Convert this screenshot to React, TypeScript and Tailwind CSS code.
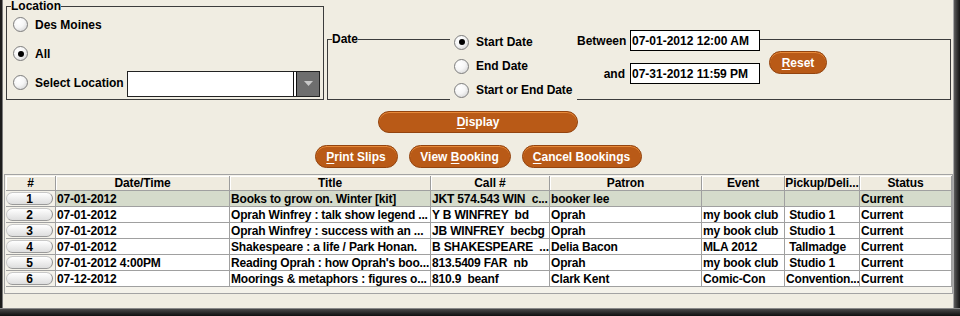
import React from "react";

function Radio({ checked }: { checked?: boolean }) {
  return (
    <span className="flex h-[15px] w-[15px] shrink-0 items-center justify-center rounded-full border border-[#7d7d7d] bg-[radial-gradient(circle_at_35%_30%,#ffffff_0%,#f6f6f6_45%,#cdcdcd_100%)]">
      {checked && <span className="h-[6px] w-[6px] rounded-full bg-black" />}
    </span>
  );
}

function OBtn({ className, children }: { className: string; children: React.ReactNode }) {
  return (
    <div
      className={
        "flex items-center justify-center rounded-full border border-[#93440f] bg-[#b95a17] text-[12px] font-bold leading-none text-white shadow-[inset_0_1px_0_#e88a3a] " +
        className
      }
    >
      {children}
    </div>
  );
}

function U({ children }: { children: React.ReactNode }) {
  return <span className="underline decoration-1 underline-offset-[2px]">{children}</span>;
}

const colW = [
  "w-[50px]",
  "w-[174px]",
  "w-[201px]",
  "w-[119px]",
  "w-[152px]",
  "w-[83px]",
  "w-[75px]",
  "w-[92px]",
];

const headers = ["#", "Date/Time", "Title", "Call #", "Patron", "Event", "Pickup/Deli...", "Status"];

const rows: string[][] = [
  ["07-01-2012", "Books to grow on. Winter [kit]", "JKT 574.543 WIN  c...", "booker lee", "", "", "Current"],
  ["07-01-2012", "Oprah Winfrey : talk show legend ...", "Y B WINFREY  bd", "Oprah", "my book club", " Studio 1", "Current"],
  ["07-01-2012", "Oprah Winfrey : success with an ...", "JB WINFREY  becbg", "Oprah", "my book club", " Studio 1", "Current"],
  ["07-01-2012", "Shakespeare : a life / Park Honan.", "B SHAKESPEARE  ...", "Delia Bacon", "MLA 2012", " Tallmadge", "Current"],
  ["07-01-2012 4:00PM", "Reading Oprah : how Oprah's boo...", "813.5409 FAR  nb", "Oprah", "my book club", " Studio 1", "Current"],
  ["07-12-2012", "Moorings & metaphors : figures o...", "810.9  beanf", "Clark Kent", "Comic-Con", "Convention...", "Current"],
];

export default function App() {
  return (
    <div className="flex h-[316px] w-[960px] flex-col overflow-hidden bg-[#f0ede2] font-['Liberation_Sans',Arial,sans-serif] text-[12px] font-bold text-black">
      <div className="flex min-h-0 flex-1">
        <div className="w-[3px] border-r border-[#7a7a7a] bg-[#1c1c1c]" />
        <main className="flex w-[950px] flex-col">
          {/* Top row */}
          <div className="flex h-[100px]">
            <fieldset className="ml-[3px] h-[100px] w-[318px] border border-[#3c3c3c] p-0">
              <legend className="ml-[4px] px-0 leading-[12px]">Location</legend>
              <div className="-mt-[2px] flex flex-col">
                <div className="flex h-[29px] items-center pl-[6px]">
                  <Radio />
                  <span className="ml-[7px]">Des Moines</span>
                </div>
                <div className="flex h-[29px] items-center pl-[6px]">
                  <Radio checked />
                  <span className="ml-[7px]">All</span>
                </div>
                <div className="flex h-[29px] items-center pl-[6px]">
                  <Radio />
                  <span className="ml-[7px] w-[92px]">Select Location</span>
                  <div className="mt-[2px] flex h-[26px] w-[193px] border border-[#222] bg-white">
                    <div className="flex-1" />
                    <div className="flex w-[26px] border-l border-[#111]">
                      <div className="w-[2px] bg-white" />
                      <div className="flex flex-1 items-center justify-center border-l border-[#111] bg-[#6e6e6e]">
                        <svg width="9" height="5" viewBox="0 0 9 5">
                          <path d="M0 0 H9 L4.5 5 Z" fill="#c8c8c8" />
                        </svg>
                      </div>
                    </div>
                  </div>
                </div>
              </div>
            </fieldset>

            <fieldset className="ml-[3px] mt-[33px] h-[67px] w-[624px] border border-[#3c3c3c] p-0">
              <legend className="ml-[4px] px-0 leading-[12px]">Date</legend>
              <div className="-mt-[15px] flex items-start">
                <div className="ml-[122px] flex w-[127px] flex-col bg-[#f0ede2]">
                  <div className="flex h-[24px] items-center pl-[4px]">
                    <Radio checked />
                    <span className="ml-[7px]">Start Date</span>
                  </div>
                  <div className="flex h-[24px] items-center pl-[4px]">
                    <Radio />
                    <span className="ml-[7px]">End Date</span>
                  </div>
                  <div className="flex h-[24px] items-center pl-[4px]">
                    <Radio />
                    <span className="ml-[7px] tracking-[-0.1px]">Start or End Date</span>
                  </div>
                </div>
                <div className="flex flex-col gap-[12px]">
                  <div className="flex h-[21px] items-center">
                    <span className="w-[53px] bg-[#f0ede2] pr-[5px] text-right">Between</span>
                    <div className="flex h-[21px] w-[130px] items-center border border-black bg-white pl-[1px]">
                      07-01-2012 12:00 AM
                    </div>
                  </div>
                  <div className="flex h-[21px] items-center">
                    <span className="w-[53px] pr-[5px] text-right">and</span>
                    <div className="flex h-[21px] w-[130px] items-center border border-black bg-white pl-[1px]">
                      07-31-2012 11:59 PM
                    </div>
                  </div>
                </div>
                <OBtn className="ml-[9px] mt-[21px] h-[23px] w-[58px]">
                  <U>R</U>eset
                </OBtn>
              </div>
            </fieldset>
          </div>

          {/* Display */}
          <div className="mt-[11px] flex justify-center">
            <OBtn className="h-[22px] w-[200px]">
              <U>D</U>isplay
            </OBtn>
          </div>

          {/* Action buttons */}
          <div className="mt-[12px] flex justify-center gap-[11px]">
            <OBtn className="h-[23px] w-[83px]">
              <U>P</U>rint Slips
            </OBtn>
            <OBtn className="h-[23px] w-[102px]">
              View&nbsp;<U>B</U>ooking
            </OBtn>
            <OBtn className="h-[23px] w-[120px]">
              <U>C</U>ancel Bookings
            </OBtn>
          </div>

          {/* Table */}
          <div className="ml-[1px] mt-[6px] flex h-[120px] w-[949px] flex-col border border-[#a3a3a3] bg-[#f4f2ea] pl-[1px] pt-[1px]">
            <div className="flex h-[15px] shrink-0 border-b border-[#a0a0a0] bg-[#efebdf]">
              {headers.map((h, i) => (
                <div
                  key={i}
                  className={
                    colW[i] +
                    " flex shrink-0 items-center justify-center overflow-hidden whitespace-pre border-r border-[#9c9c9c] leading-none tracking-[-0.1px] shadow-[inset_1px_1px_0_#ffffff]"
                  }
                >
                  {h}
                </div>
              ))}
            </div>
            {rows.map((r, ri) => (
              <div key={ri} className="flex h-[16px] shrink-0 border-b border-[#a0a0a0]">
                <div className="flex w-[50px] shrink-0 items-center border-r border-[#a0a0a0] bg-[#f4f2ea]">
                  <div className="flex h-[13px] w-[47px] items-center justify-center rounded-full border border-[#c8c8c8] border-r-[#8d8d8d] border-b-[#9a9a9a] bg-linear-to-b from-[#ffffff] to-[#dedede] leading-none">
                    {ri + 1}
                  </div>
                </div>
                {r.map((c, ci) => (
                  <div
                    key={ci}
                    className={
                      colW[ci + 1] +
                      " flex shrink-0 items-center overflow-hidden whitespace-pre border-r border-[#a0a0a0] pl-[1px] leading-none tracking-[-0.18px] " +
                      (ri === 0 ? "bg-[#d5dbcb]" : "bg-white")
                    }
                  >
                    {c}
                  </div>
                ))}
              </div>
            ))}
          </div>
        </main>
        <div className="w-[7px] border-l border-[#a8a8a8] bg-linear-to-r from-[#5c5c5c] to-[#151515]" />
      </div>
      <div className="h-[8px] border-t border-[#8a8a8a] bg-linear-to-b from-[#4a4a4a] to-[#101010]" />
    </div>
  );
}
